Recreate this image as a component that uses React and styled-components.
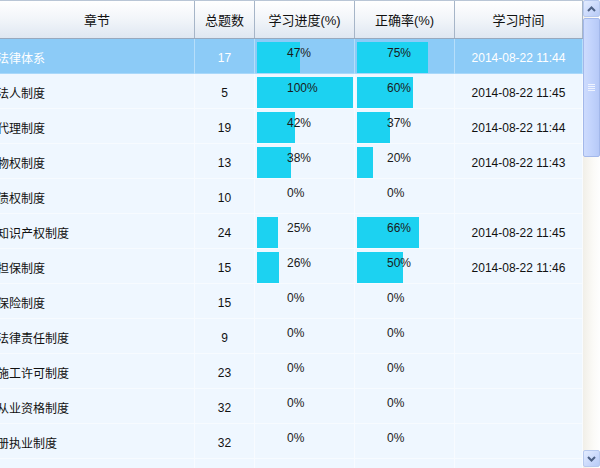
import React from "react";
import styled, { createGlobalStyle, css } from "styled-components";

const Global = createGlobalStyle`
  html, body { margin: 0; padding: 0; background: #eff7ff; }
  body { font-family: "Liberation Sans", "Noto Sans CJK SC", sans-serif; }
`;

const COLS = "195px 60px 100px 100px 128px";

const Frame = styled.div`
  width: 600px;
  height: 468px;
  overflow: hidden;
  display: flex;
  background: #eff7ff;
`;

const Grid = styled.div`
  width: 583px;
  flex: none;
  display: flex;
  flex-direction: column;
  overflow: hidden;
`;

const HeaderRow = styled.div`
  display: grid;
  grid-template-columns: ${COLS};
  height: 39px;
  box-sizing: border-box;
  border-top: 1px solid #b9c6d6;
  border-bottom: 1px solid #98a9be;
  background: linear-gradient(#ffffff 0%, #f3f6fa 45%, #dfe7f1 100%);
  flex: none;
`;

const HeadCell = styled.div`
  display: flex;
  align-items: center;
  justify-content: center;
  border-right: 1px solid #a6b5c8;
  font-size: 13px;
  color: #111;
  white-space: nowrap;
`;

const Row = styled.div`
  display: grid;
  grid-template-columns: ${COLS};
  height: 35px;
  box-sizing: border-box;
  border-bottom: 1px solid ${(p) => (p.$sel ? "#a9d8fa" : "#f7fbff")};
  background: ${(p) => (p.$sel ? "#8ccbf7" : "#eff7ff")};
  color: ${(p) => (p.$sel ? "#ffffff" : "#111111")};
  flex: none;
`;

const Cell = styled.div`
  display: flex;
  align-items: center;
  padding-top: 2px;
  box-sizing: border-box;
  border-right: 1px solid ${(p) => (p.$sel ? "#b6defa" : "#f8fbff")};
  font-size: 12px;
  white-space: nowrap;
  overflow: hidden;
  ${(p) =>
    p.$center &&
    css`
      justify-content: center;
    `}
`;

const Title = styled.span`
  margin-left: -3px;
`;

const BarCell = styled.div`
  border-right: 1px solid ${(p) => (p.$sel ? "#b6defa" : "#f8fbff")};
  padding: 3px 2px 1px 2px;
  box-sizing: border-box;
`;

const Track = styled.div`
  position: relative;
  height: 31px;
`;

const Fill = styled.div`
  height: 100%;
  background: #1cd2f1;
`;

const Label = styled.span`
  position: absolute;
  left: 30px;
  top: 4px;
  font-size: 12px;
  color: #1a1a1a;
  line-height: 14px;
`;

const Scrollbar = styled.div`
  width: 17px;
  flex: none;
  display: flex;
  flex-direction: column;
  background: linear-gradient(90deg, #f1efe8 0%, #fbfaf7 60%, #fefefe 100%);
`;

const SBtn = styled.div`
  height: 17px;
  box-sizing: border-box;
  margin: 0 0 1px 0;
  border: 1px solid #b7c9ee;
  border-radius: 2px;
  background: linear-gradient(135deg, #e3ecfe 0%, #c9d8fb 60%, #b8cbf6 100%);
  display: flex;
  align-items: center;
  justify-content: center;
  flex: none;
`;

const Thumb = styled.div`
  height: 139px;
  box-sizing: border-box;
  border: 1px solid #a3b8ea;
  border-radius: 2px;
  background: linear-gradient(90deg, #cddbfd 0%, #c2d3fc 50%, #b6c9f7 100%);
  display: flex;
  align-items: center;
  justify-content: center;
  flex: none;
`;

const Spacer = styled.div`
  flex: 1;
`;

const Arrow = ({ down }) => (
  <svg width="9" height="6" viewBox="0 0 9 6">
    <path
      d={down ? "M1 1 L4.5 4.5 L8 1" : "M1 5 L4.5 1.5 L8 5"}
      fill="none"
      stroke="#4d6185"
      strokeWidth="2"
    />
  </svg>
);

const Grip = () => (
  <svg width="7" height="8" viewBox="0 0 7 8">
    {[0.5, 2.5, 4.5, 6.5].map((y) => (
      <line key={y} x1="0" x2="7" y1={y} y2={y} stroke="#eef3fe" strokeWidth="1" />
    ))}
  </svg>
);

const rows = [
  { t: "法律体系", n: 17, p: 47, c: 75, d: "2014-08-22 11:44", sel: true },
  { t: "法人制度", n: 5, p: 100, c: 60, d: "2014-08-22 11:45" },
  { t: "代理制度", n: 19, p: 42, c: 37, d: "2014-08-22 11:44" },
  { t: "物权制度", n: 13, p: 38, c: 20, d: "2014-08-22 11:43" },
  { t: "债权制度", n: 10, p: 0, c: 0, d: "" },
  { t: "知识产权制度", n: 24, p: 25, c: 66, d: "2014-08-22 11:45" },
  { t: "担保制度", n: 15, p: 26, c: 50, d: "2014-08-22 11:46" },
  { t: "保险制度", n: 15, p: 0, c: 0, d: "" },
  { t: "法律责任制度", n: 9, p: 0, c: 0, d: "" },
  { t: "施工许可制度", n: 23, p: 0, c: 0, d: "" },
  { t: "从业资格制度", n: 32, p: 0, c: 0, d: "" },
  { t: "册执业制度", n: 32, p: 0, c: 0, d: "" },
];

const Bar = ({ value, sel }) => (
  <BarCell $sel={sel}>
    <Track>
      {value > 0 && <Fill style={{ width: `${value - 4}px` }} />}
      <Label>{value}%</Label>
    </Track>
  </BarCell>
);

export default function App() {
  return (
    <>
      <Global />
      <Frame>
        <Grid>
          <HeaderRow>
            <HeadCell>章节</HeadCell>
            <HeadCell>总题数</HeadCell>
            <HeadCell>学习进度(%)</HeadCell>
            <HeadCell>正确率(%)</HeadCell>
            <HeadCell>学习时间</HeadCell>
          </HeaderRow>
          {rows.map((r) => (
            <Row key={r.t} $sel={r.sel}>
              <Cell $sel={r.sel}>
                <Title>{r.t}</Title>
              </Cell>
              <Cell $sel={r.sel} $center>
                {r.n}
              </Cell>
              <Bar value={r.p} sel={r.sel} />
              <Bar value={r.c} sel={r.sel} />
              <Cell $sel={r.sel} $center>
                {r.d}
              </Cell>
            </Row>
          ))}
          <Row>
            <Cell />
            <Cell />
            <Cell />
            <Cell />
            <Cell />
          </Row>
        </Grid>
        <Scrollbar>
          <SBtn>
            <Arrow />
          </SBtn>
          <Thumb>
            <Grip />
          </Thumb>
          <Spacer />
          <SBtn>
            <Arrow down />
          </SBtn>
        </Scrollbar>
      </Frame>
    </>
  );
}
